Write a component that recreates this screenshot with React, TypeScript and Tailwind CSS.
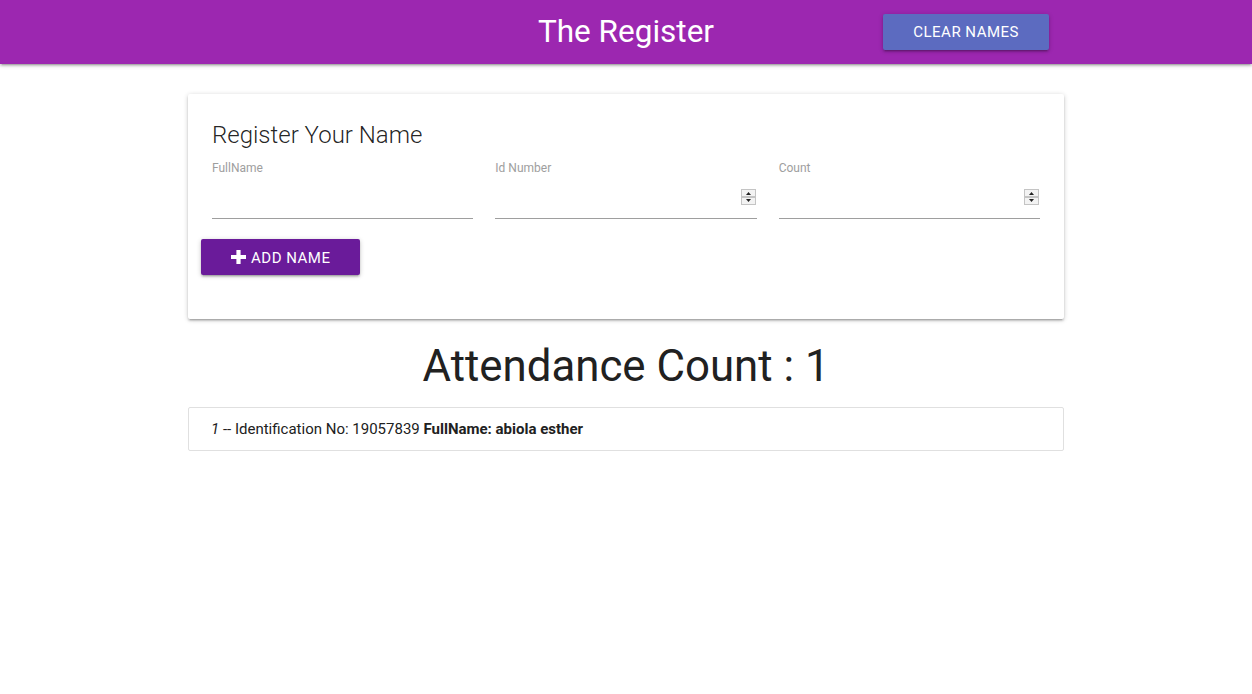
import React from 'react';

// --- Types ---
interface Attendee {
  idNumber: string;
  fullName: string;
}

const shadow = 'shadow-[0_2px_2px_0_rgba(0,0,0,0.14),0_3px_1px_-2px_rgba(0,0,0,0.12),0_1px_5px_0_rgba(0,0,0,0.2)]';

// --- Old-style number spinner ---
const Spinner = () => (
  <svg width="15" height="16" viewBox="0 0 15 16" className="shrink-0">
    <rect x="0" y="0" width="15" height="16" fill="#e9e9e9" />
    <rect x="0.5" y="0.5" width="14" height="7" fill="#f3f3f3" stroke="#c4c4c4" />
    <rect x="0.5" y="8.5" width="14" height="7" fill="#f3f3f3" stroke="#c4c4c4" />
    <path d="M5 6 L10 6 L7.5 3 Z" fill="#222" />
    <path d="M5 10 L10 10 L7.5 13 Z" fill="#222" />
  </svg>
);

const Field = ({ label, numeric }: { label: string; numeric?: boolean }) => (
  <div className="flex flex-col">
    <label className="text-[12px] leading-[14px] text-[#9e9e9e]">{label}</label>
    <div className="flex items-center justify-end h-[44px] border-b border-[#9e9e9e] pr-[1px]">
      {numeric && <Spinner />}
    </div>
  </div>
);

export default function App() {
  const attendees: Attendee[] = [{ idNumber: '19057839', fullName: 'abiola esther' }];

  return (
    <div className="min-h-[694px] bg-white font-['Roboto',sans-serif] text-[rgba(0,0,0,0.87)]">
      {/* Header */}
      <header className={`h-16 bg-[#9c27b0] ${shadow}`}>
        <div className="w-[876px] mx-auto h-full grid grid-cols-[1fr_auto_1fr] items-center">
          <div />
          <h1 className="text-white text-[31.5px] leading-[64px] font-normal">The Register</h1>
          <div className="flex justify-end pr-[15px]">
            <button className={`h-9 px-[30px] bg-[#5c6bc0] text-white text-[15px] tracking-[0.5px] rounded-[2px] ${shadow}`}>
              CLEAR NAMES
            </button>
          </div>
        </div>
      </header>

      <main className="w-[876px] mx-auto pt-[30px]">
        {/* Form card */}
        <div className={`bg-white rounded-[2px] px-6 pt-[25px] pb-[44px] ${shadow}`}>
          <h2 className="text-[24px] leading-8 font-light text-[rgba(0,0,0,0.87)]">Register Your Name</h2>
          <div className="grid grid-cols-3 gap-[22px] mt-[10px]">
            <Field label="FullName" />
            <Field label="Id Number" numeric />
            <Field label="Count" numeric />
          </div>
          <button
            className={`mt-[20px] -ml-[11px] h-9 pl-[29px] pr-[30px] bg-[#6a1b9a] text-white text-[15px] tracking-[0.5px] rounded-[2px] flex items-center gap-[4px] ${shadow}`}
          >
            <svg width="17" height="14" viewBox="0 0 17 14">
              <path d="M8.5 0 V14 M1 7 H16" stroke="white" strokeWidth="4.2" />
            </svg>
            <span className="pt-[3px]">ADD NAME</span>
          </button>
        </div>

        {/* Attendance */}
        <h3 className="text-center text-[43.8px] leading-[56px] font-normal mt-[19px] mb-[13px] text-[#212121]">
          Attendance Count : {attendees.length}
        </h3>

        <ul className="border border-[#e0e0e0] rounded-[2px]">
          {attendees.map((a, i) => (
            <li key={a.idNumber} className="px-[22px] py-[10px] text-[15px] leading-[22px] text-[#212121]">
              <i>{i + 1}</i> -- Identification No: {a.idNumber} <b>FullName: {a.fullName}</b>
            </li>
          ))}
        </ul>
      </main>
    </div>
  );
}
